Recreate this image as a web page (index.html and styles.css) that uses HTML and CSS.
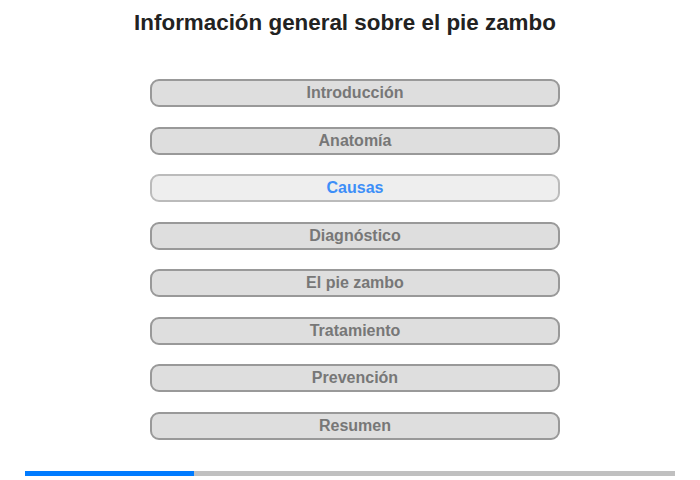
FILE: index.html
```html
<!DOCTYPE html>
<html lang="es">
<head>
    <meta charset="UTF-8">
    <meta name="viewport" content="width=device-width, initial-scale=1.0">
    <title>Información general sobre el pie zambo</title>
    <link rel="stylesheet" href="styles.css">
</head>
<body>

<div class="page">
    <h1 class="title">Información general sobre el pie zambo</h1>

    <nav class="chapters">
        <button class="chapter">Introducción</button>
        <button class="chapter">Anatomía</button>
        <button class="chapter active">Causas</button>
        <button class="chapter">Diagnóstico</button>
        <button class="chapter">El pie zambo</button>
        <button class="chapter">Tratamiento</button>
        <button class="chapter">Prevención</button>
        <button class="chapter">Resumen</button>
    </nav>

    <div class="progress">
        <div class="progress-fill" style="width: 26%"></div>
    </div>
</div>

</body>
</html>
```

FILE: styles.css
```css
body {
    margin: 0;
    font-family: "Liberation Sans", Arial, sans-serif;
    background-color: #fff;
}
.page {
    width: 700px;
    height: 480px;
    display: flex;
    flex-direction: column;
}
.title {
    margin: 11px 0 0 0;
    padding-right: 10px;
    font-size: 22.4px;
    line-height: 24px;
    font-weight: bold;
    color: #222;
    text-align: center;
}
.chapters {
    margin-top: 44px;
    display: flex;
    flex-direction: column;
    align-items: center;
    gap: 19.5px;
    padding-left: 10px;
}
.chapter {
    width: 410px;
    height: 28px;
    padding: 0;
    background-color: #dedede;
    border: 2px solid #999;
    border-radius: 9px;
    font-family: inherit;
    font-size: 16px;
    font-weight: bold;
    color: #777;
    cursor: pointer;
}
.chapter.active {
    background-color: #eee;
    border-color: #bbb;
    color: #3d8ef8;
}
.progress {
    margin: auto 25px 4px 25px;
    height: 5px;
    background-color: #c0c0c0;
}
.progress-fill {
    height: 100%;
    background-color: #007bff;
}
```
